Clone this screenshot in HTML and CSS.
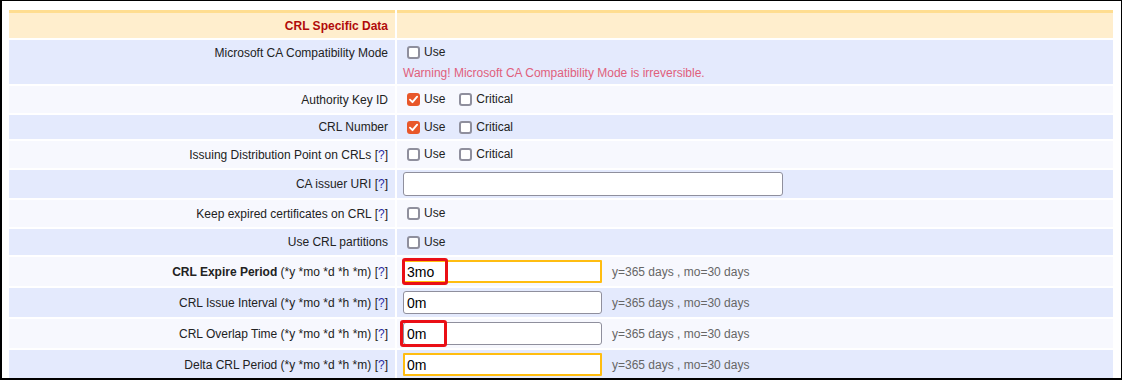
FILE: index.html
```html
<!DOCTYPE html>
<html>
<head>
<meta charset="utf-8">
<link rel="stylesheet" href="styles.css">
</head>
<body>
<div class="frame">
  <div class="form">
    <div class="row head">
      <div class="lbl title"><span>CRL Specific Data</span></div>
      <div class="val"></div>
    </div>
    <div class="row blue ms">
      <div class="lbl top"><span>Microsoft CA Compatibility Mode</span></div>
      <div class="val stack">
        <div class="checks"><label class="chk"><span class="cb"></span>Use</label></div>
        <div class="warn">Warning! Microsoft CA Compatibility Mode is irreversible.</div>
      </div>
    </div>
    <div class="row light h27">
      <div class="lbl"><span>Authority Key ID</span></div>
      <div class="val"><div class="checks"><label class="chk"><span class="cb on"><svg viewBox="0 0 14 14"><path d="M3.2 7.2 L5.9 9.9 L10.9 3.9"/></svg></span>Use</label><label class="chk"><span class="cb"></span>Critical</label></div></div>
    </div>
    <div class="row blue h24">
      <div class="lbl"><span>CRL Number</span></div>
      <div class="val"><div class="checks"><label class="chk"><span class="cb on"><svg viewBox="0 0 14 14"><path d="M3.2 7.2 L5.9 9.9 L10.9 3.9"/></svg></span>Use</label><label class="chk"><span class="cb"></span>Critical</label></div></div>
    </div>
    <div class="row light h27">
      <div class="lbl"><span>Issuing Distribution Point on CRLs <span class="help">[<a>?</a>]</span></span></div>
      <div class="val"><div class="checks"><label class="chk"><span class="cb"></span>Use</label><label class="chk"><span class="cb"></span>Critical</label></div></div>
    </div>
    <div class="row blue h28">
      <div class="lbl"><span>CA issuer URI <span class="help">[<a>?</a>]</span></span></div>
      <div class="val"><input class="txt uri" type="text" value=""></div>
    </div>
    <div class="row light h27">
      <div class="lbl"><span>Keep expired certificates on CRL <span class="help">[<a>?</a>]</span></span></div>
      <div class="val"><div class="checks"><label class="chk"><span class="cb"></span>Use</label></div></div>
    </div>
    <div class="row blue h26">
      <div class="lbl"><span>Use CRL partitions</span></div>
      <div class="val"><div class="checks"><label class="chk"><span class="cb"></span>Use</label></div></div>
    </div>
    <div class="row light h29">
      <div class="lbl"><span><b>CRL Expire Period</b> (*y *mo *d *h *m) <span class="help">[<a>?</a>]</span></span></div>
      <div class="val"><span class="fieldwrap"><input class="txt period warnb" type="text" value="3mo"><span class="mark m1"></span></span><span class="hint">y=365 days , mo=30 days</span></div>
    </div>
    <div class="row blue h29">
      <div class="lbl"><span>CRL Issue Interval (*y *mo *d *h *m) <span class="help">[<a>?</a>]</span></span></div>
      <div class="val"><span class="fieldwrap"><input class="txt period" type="text" value="0m"></span><span class="hint">y=365 days , mo=30 days</span></div>
    </div>
    <div class="row light h29">
      <div class="lbl"><span>CRL Overlap Time (*y *mo *d *h *m) <span class="help">[<a>?</a>]</span></span></div>
      <div class="val"><span class="fieldwrap"><input class="txt period" type="text" value="0m"><span class="mark m2"></span></span><span class="hint">y=365 days , mo=30 days</span></div>
    </div>
    <div class="row blue h29">
      <div class="lbl"><span>Delta CRL Period (*y *mo *d *h *m) <span class="help">[<a>?</a>]</span></span></div>
      <div class="val"><span class="fieldwrap"><input class="txt period warnb" type="text" value="0m"></span><span class="hint">y=365 days , mo=30 days</span></div>
    </div>
  </div>
</div>
</body>
</html>
```
FILE: styles.css
```css
html, body {
  margin: 0;
  padding: 0;
  background: #fff;
}
body {
  font-family: "Liberation Sans", Arial, sans-serif;
  font-size: 12px;
  color: #222;
}
.frame {
  box-sizing: border-box;
  width: 1122px;
  height: 380px;
  border: 1px solid #000;
  border-left-width: 2px;
  border-bottom-width: 2px;
  padding: 9px 8px 0 7px;
  overflow: hidden;
  background: #fff;
}
.form {
  display: flex;
  flex-direction: column;
  gap: 2px;
}
.row {
  display: grid;
  grid-template-columns: 386px 1fr;
  column-gap: 2px;
}
.row > div {
  display: flex;
  align-items: center;
  box-sizing: border-box;
}
.lbl {
  justify-content: flex-end;
  padding-right: 7px;
  text-align: right;
  line-height: 14px;
  white-space: nowrap;
}
.val {
  padding-left: 6px;
}
.head > div {
  height: 28px;
  background: #ffeecd;
  border-top: 3px solid #ffdd90;
}
.title {
  color: #b10a0a;
  font-weight: bold;
  padding-top: 1px;
}
.blue > div { background: #e4eafd; }
.light > div { background: #f7f8fe; }
.ms > div { height: 44px; }
.h24 > div { height: 24px; }
.h26 > div { height: 26px; }
.h27 > div { height: 27px; }
.h28 > div { height: 28px; }
.h29 > div { height: 29px; }
.row > .top {
  align-items: flex-start;
  padding-top: 6px;
}
.row > .stack {
  flex-direction: column;
  align-items: flex-start;
  padding-top: 3px;
}
.warn {
  color: #e0607c;
  line-height: 14px;
  margin-top: 4px;
}
.checks {
  display: flex;
  align-items: center;
}
.chk {
  display: flex;
  align-items: center;
  margin-right: 10px;
  line-height: 19px;
}
.cb {
  box-sizing: border-box;
  width: 13px;
  height: 13px;
  margin: 3px 4px 3px 4px;
  border: 2px solid #8f8f9d;
  border-radius: 3px;
  background: #fff;
  display: inline-flex;
}
.cb.on {
  border: none;
  background: #e8572a;
}
.cb svg {
  width: 13px;
  height: 13px;
}
.cb svg path {
  fill: none;
  stroke: #fff;
  stroke-width: 2;
  stroke-linecap: round;
  stroke-linejoin: round;
}
.help a {
  color: #2c2ca6;
}
.txt {
  box-sizing: border-box;
  font-family: "Liberation Sans", Arial, sans-serif;
  font-size: 14px;
  color: #000;
  background: #fff;
  border: 1px solid #8f8f9d;
  border-radius: 3px;
  outline: none;
  margin: 0;
  padding: 0 3px;
}
.uri {
  width: 380px;
  height: 24px;
}
.period {
  width: 199px;
  height: 23px;
}
.period.warnb {
  border: 2px solid #ffbd11;
  border-radius: 1px;
  padding: 0 2px;
}
.fieldwrap {
  position: relative;
  display: inline-flex;
}
.mark {
  position: absolute;
  box-sizing: border-box;
  border: 3px solid #ea0f16;
  border-radius: 3px;
  pointer-events: none;
}
.m1 {
  left: -1px;
  top: -2px;
  width: 46px;
  height: 27px;
}
.m2 {
  left: -3px;
  top: -2px;
  width: 47px;
  height: 27px;
}
.hint {
  color: #666;
  margin-left: 10px;
  line-height: 14px;
}
```
